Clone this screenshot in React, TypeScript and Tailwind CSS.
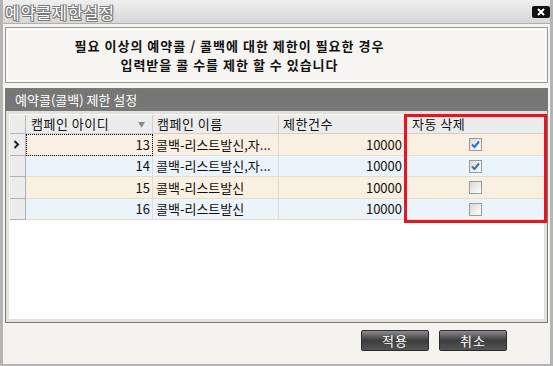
import React from "react";

const rows = [
  { id: 13, name: "콜백-리스트발신,자...", limit: 10000, auto: true },
  { id: 14, name: "콜백-리스트발신,자...", limit: 10000, auto: true },
  { id: 15, name: "콜백-리스트발신", limit: 10000, auto: false },
  { id: 16, name: "콜백-리스트발신", limit: 10000, auto: false },
];

const CheckBox = ({ checked }: { checked: boolean }) => (
  <div className="w-[13px] h-[13px] border border-[#9a9a9a] bg-gradient-to-br from-[#d8d8d8] to-[#ffffff] flex items-center justify-center">
    {checked && (
      <svg width="9" height="9" viewBox="0 0 9 9">
        <path d="M1 4.5 L3.5 7 L8 1.5" stroke="#2f6fc4" strokeWidth="2" fill="none" />
      </svg>
    )}
  </div>
);

const DarkButton = ({ label }: { label: string }) => (
  <button className="w-[68px] h-[21px] rounded-[2px] border border-[#2b2b2b] bg-gradient-to-b from-[#8c8c8c] via-[#3d3d3d] to-[#555555] text-white text-[13px] leading-none flex items-center justify-center tracking-[1px]">
    {label}
  </button>
);

const App = () => {
  return (
    <div className="w-[553px] h-[366px] bg-[#f4f3ef] border-l-[3px] border-r-[3px] border-b-[2px] border-[#b4b4b4] flex flex-col font-['Noto_Sans_CJK_KR',sans-serif] text-[#111] overflow-hidden">
      {/* title bar */}
      <div className="h-[24px] -mx-[3px] bg-gradient-to-b from-[#efefef] to-[#d6d6d6] border-b border-[#b0b0b0] flex items-center justify-between pl-[5px] pr-[3px]">
        <span className="text-[16px] text-white tracking-[1px] [text-shadow:1px_1px_0_#7a7a7a,-1px_-1px_0_#7a7a7a,1px_-1px_0_#7a7a7a,-1px_1px_0_#7a7a7a,0_1px_0_#7a7a7a,1px_0_0_#7a7a7a]">
          예약콜제한설정
        </span>
        <div className="w-[18px] h-[12px] rounded-[2px] bg-[#111] flex items-center justify-center">
          <svg width="10" height="8" viewBox="0 0 10 8">
            <path d="M2 1 L8 7 M8 1 L2 7" stroke="#fff" strokeWidth="2" />
          </svg>
        </div>
      </div>

      <div className="flex-1 flex flex-col px-[2px]">
        {/* info box */}
        <div className="mt-[3px] h-[56px] border border-[#9a9a9a] p-[1px]">
          <div className="h-full border border-[#ffffff] bg-[#f6f5f1] flex flex-col items-center justify-center pr-[94px] text-[13px] font-bold leading-[19px] tracking-[1px]">
            <div>필요 이상의 예약콜 / 콜백에 대한 제한이 필요한 경우</div>
            <div>입력받을 콜 수를 제한 할 수 있습니다</div>
          </div>
        </div>

        {/* group */}
        <div className="mt-[5px] h-[235px] border border-[#7a7a7a] flex flex-col">
          <div className="h-[22px] bg-[#777777] text-white text-[13px] flex items-center pl-[9px]">
            예약콜(콜백) 제한 설정
          </div>
          <div className="flex-1 bg-white border-[3px] border-[#e4e0da] pl-[1px] pt-[1px] relative">
            <div className="grid grid-cols-[16px_127px_126px_127px_138px] text-[13px]">
              {/* header */}
              <div className="h-[19px] bg-[#ececec] border-r border-b border-[#b8b8b8]" />
              <div className="h-[19px] bg-[#ececec] border-r border-b border-[#cfcfcf] flex items-center justify-between pl-[5px] pr-[7px]">
                <span className="tracking-[0.5px]">캠페인 아이디</span>
                <span className="text-[7px] text-[#888]">▼</span>
              </div>
              <div className="h-[19px] bg-[#ececec] border-r border-b border-[#cfcfcf] flex items-center pl-[4px] tracking-[0.5px]">
                캠페인 이름
              </div>
              <div className="h-[19px] bg-[#ececec] border-r border-b border-[#cfcfcf] flex items-center pl-[4px] tracking-[0.5px]">
                제한건수
              </div>
              <div className="h-[19px] bg-[#ececec] border-b border-[#cfcfcf] flex items-center pl-[6px] tracking-[0.5px]">
                자동 삭제
              </div>

              {rows.map((r, i) => {
                const bg = i % 2 === 0 ? "bg-[#faf0e1]" : "bg-[#ebf3fb]";
                const h = i % 2 === 0 ? "h-[22px]" : "h-[21px]";
                return (
                  <React.Fragment key={r.id}>
                    <div className={`${h} bg-[#ececec] border-r border-b border-[#b0b0b0] flex items-center pl-[3px]`}>
                      {i === 0 && (
                        <svg width="7" height="9" viewBox="0 0 7 9">
                          <path d="M1.5 1 L5 4.5 L1.5 8" stroke="#222" strokeWidth="2" fill="none" />
                        </svg>
                      )}
                    </div>
                    <div className={`${h} ${bg} border-r border-b border-[#e2dcd2] flex items-center justify-end pr-[2px] ${i === 0 ? "outline outline-1 outline-dotted outline-black -outline-offset-1" : ""}`}>
                      {r.id}
                    </div>
                    <div className={`${h} ${bg} border-r border-b border-[#e2dcd2] flex items-center pl-[3px] whitespace-nowrap overflow-hidden`}>
                      {r.name}
                    </div>
                    <div className={`${h} ${bg} border-r border-b border-[#e2dcd2] flex items-center justify-end pr-[3px]`}>
                      {r.limit}
                    </div>
                    <div className={`${h} ${bg} border-b border-[#e2dcd2] flex items-center justify-center`}>
                      <CheckBox checked={r.auto} />
                    </div>
                  </React.Fragment>
                );
              })}
            </div>
            {/* highlight */}
            <div className="absolute left-[395px] top-[0px] w-[143px] h-[109px] border-[3px] border-[#e8141e]" />
          </div>
        </div>

        {/* buttons */}
        <div className="mt-[7px] flex justify-end gap-[10px] pr-[41px]">
          <DarkButton label="적용" />
          <DarkButton label="취소" />
        </div>
      </div>
    </div>
  );
};

export default App;
